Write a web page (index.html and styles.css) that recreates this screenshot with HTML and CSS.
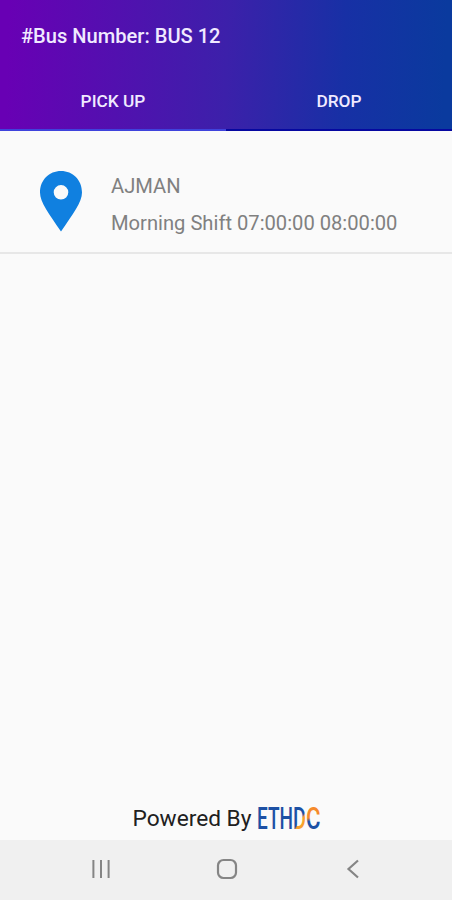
FILE: index.html
```html
<!DOCTYPE html>
<html lang="en">
<head>
<meta charset="utf-8">
<title>Bus 12</title>
<link rel="stylesheet" href="styles.css">
</head>
<body>
<div class="app">
  <header class="header">
    <h1 class="title">#Bus Number: BUS 12</h1>
    <nav class="tabs">
      <a class="tab tab-active">PICK UP</a>
      <a class="tab">DROP</a>
    </nav>
  </header>
  <main class="list">
    <section class="row">
      <svg class="pin" width="44" height="62" viewBox="0 0 44 62">
        <path fill="#1080e0" fill-rule="evenodd" d="M22 1C10.100 1 1 10 1 22.500C1 32 10 44 22 61.500C34 44 43 32 43 22.500C43 10 33.900 1 22 1ZM22 15a7.300 7.300 0 1 1 0 14.600a7.300 7.300 0 1 1 0-14.600Z"/>
      </svg>
      <div class="info">
        <div class="place">AJMAN</div>
        <div class="shift">Morning Shift 07:00:00 08:00:00</div>
      </div>
    </section>
  </main>
  <footer class="powered">
    <span class="by">Powered By</span>
    <svg class="logo" width="68" height="43" viewBox="0 0 68 43">
      <defs>
        <linearGradient id="d" gradientUnits="userSpaceOnUse" x1="37" y1="16" x2="53" y2="26">
          <stop offset=".5" stop-color="#1c50a4"/><stop offset=".58" stop-color="#f7a12b"/>
        </linearGradient>
        <linearGradient id="c" gradientUnits="userSpaceOnUse" x1="0" y1="10" x2="0" y2="32">
          <stop offset=".5" stop-color="#f58a2c"/><stop offset=".66" stop-color="#1c50a4"/>
        </linearGradient>
      </defs>
      <text class="mark" fill="#1c50a4" x="1" y="32" textLength="36" lengthAdjust="spacingAndGlyphs">ETH</text>
      <text class="mark" fill="url(#d)" x="37" y="32" textLength="13" lengthAdjust="spacingAndGlyphs">D</text>
      <text class="mark" fill="url(#c)" x="50" y="32" textLength="14.500" lengthAdjust="spacingAndGlyphs">C</text>
    </svg>
  </footer>
  <nav class="system">
    <svg width="20" height="20" viewBox="0 0 20 20"><path fill="none" stroke="#858585" stroke-width="2" d="M2.400 1v18M10 1v18M17.600 1v18"/></svg>
    <svg width="22" height="22" viewBox="0 0 22 22"><rect x="2" y="2" width="18" height="18" rx="5.500" fill="none" stroke="#858585" stroke-width="2.200"/></svg>
    <svg width="20" height="20" viewBox="0 0 20 20"><path fill="none" stroke="#858585" stroke-width="2.200" d="M15 1.500L5.500 10L15 18.500"/></svg>
  </nav>
</div>
</body>
</html>
```
FILE: styles.css
```css
* { box-sizing: border-box; }
body {
  margin: 0;
  font-family: Roboto, "Liberation Sans", sans-serif;
  background: #fafafa;
}
.app {
  height: 900px;
  display: flex;
  flex-direction: column;
}
.header {
  height: 131px;
  display: flex;
  flex-direction: column;
  justify-content: space-between;
  color: #f0eaff;
  background: linear-gradient(92deg, #6800b4 2%, #3c20aa 50%, #1730a5 76%, #0a3a9e 98%);
}
.title {
  margin: 0;
  padding-left: 21px;
  font-size: 20.100px;
  font-weight: 500;
  line-height: 73px;
}
.tabs {
  display: grid;
  grid-template-columns: 1fr 1fr;
}
.tab {
  height: 58px;
  font-size: 17.300px;
  font-weight: 500;
  line-height: 57px;
  text-align: center;
  border-bottom: 2px solid #0608a0;
}
.tab-active { border-color: #3f43dc; }
.list { flex: 1; }
.row {
  height: 123px;
  display: flex;
  align-items: flex-start;
  gap: 28px;
  padding: 39px 0 0 39px;
  border-bottom: 2px solid #e7e7e7;
}
.info {
  color: #808080;
  font-size: 20.170px;
  line-height: 37px;
  white-space: nowrap;
  margin-top: -2px;
}
.powered {
  height: 43px;
  display: flex;
  justify-content: center;
  gap: 4px;
  padding-left: 4px;
}
.by {
  color: #202020;
  font-size: 22.700px;
  line-height: 43px;
}
.mark {
  font-family: Roboto, sans-serif;
  font-size: 30.500px;
  font-weight: 500;
}
.system {
  height: 60px;
  display: flex;
  justify-content: space-between;
  align-items: center;
  padding: 0 89px 2px 91px;
  background: #f0f0f0;
}
```
